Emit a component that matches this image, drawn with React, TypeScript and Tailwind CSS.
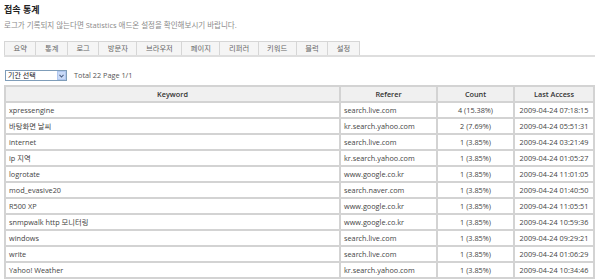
import React from "react";

const tabs = ["요약", "통계", "로그", "방문자", "브라우저", "페이지", "리퍼러", "키워드", "블럭", "설정"];

const rows = [
    ["xpressengine", "search.live.com", "4 (15.38%)", "2009-04-24 07:18:15"],
    ["바탕화면 날씨", "kr.search.yahoo.com", "2 (7.69%)", "2009-04-24 05:51:31"],
    ["internet", "search.live.com", "1 (3.85%)", "2009-04-24 03:21:49"],
    ["ip 지역", "kr.search.yahoo.com", "1 (3.85%)", "2009-04-24 01:05:27"],
    ["logrotate", "www.google.co.kr", "1 (3.85%)", "2009-04-24 11:01:05"],
    ["mod_evasive20", "search.naver.com", "1 (3.85%)", "2009-04-24 01:40:50"],
    ["R500 XP", "www.google.co.kr", "1 (3.85%)", "2009-04-24 11:05:51"],
    ["snmpwalk http 모니터링", "www.google.co.kr", "1 (3.85%)", "2009-04-24 10:59:36"],
    ["windows", "search.live.com", "1 (3.85%)", "2009-04-24 09:29:21"],
    ["write", "search.live.com", "1 (3.85%)", "2009-04-24 01:06:29"],
    ["Yahoo! Weather", "kr.search.yahoo.com", "1 (3.85%)", "2009-04-24 10:34:46"],
];

const App: React.FC = () => {
    return (
        <div className="w-[600px] h-[279px] overflow-hidden bg-white text-[#444] font-['Open_Sans','Noto_Sans_CJK_KR',sans-serif]">
            <div className="pl-[4px] pr-[5px] pt-[4px]">
                {/* title */}
                <h1 className="text-[9px] font-bold leading-[12px] text-[#222]">접속 통계</h1>
                <p className="mt-[4px] text-[7.5px] leading-[10px] text-[#8a8a8a]">
                    로그가 기록되지 않는다면 Statistics 애드온 설정을 확인해보시기 바랍니다.
                </p>

                {/* tabs */}
                <div className="mt-[11px] flex border-b-2 border-[#dedede]">
                    {tabs.map((t, i) => (
                        <div
                            key={t}
                            className={`h-[14px] px-[8.5px] flex items-center bg-[#f5f5f5] border-t border-r border-[#d6d6d6] text-[7.3px] text-[#666] ${i === 0 ? "border-l" : ""}`}
                        >
                            {t}
                        </div>
                    ))}
                </div>

                {/* period select + total */}
                <div className="mt-[13px] flex items-center">
                    <div className="ml-[1px] w-[62px] h-[11px] flex items-center border border-[#7f9db9] bg-white">
                        <span className="flex-1 pl-[2px] text-[7px] leading-[9px] text-[#111]">기간 선택</span>
                        <div className="w-[9px] h-[9px] flex items-center justify-center bg-[#c9daf8] border border-[#b1c7ef]">
                            <svg width="5" height="4" viewBox="0 0 5 4">
                                <path d="M0.5 0.8 L2.5 3 L4.5 0.8" fill="none" stroke="#4d6185" strokeWidth="1.1" />
                            </svg>
                        </div>
                    </div>
                    <span className="ml-[7px] text-[7.3px] text-[#555]">Total 22 Page 1/1</span>
                </div>

                {/* table */}
                <table className="mt-[4px] w-full table-fixed border-separate border-spacing-0 border border-[#d3d3d3] text-[7.3px]">
                    <colgroup>
                        <col className="w-[335px]" />
                        <col className="w-[97px]" />
                        <col className="w-[77px]" />
                        <col />
                    </colgroup>
                    <thead>
                        <tr>
                            {["Keyword", "Referer", "Count", "Last Access"].map((h) => (
                                <th key={h} className="h-[16px] p-0 border border-[#d3d3d3] bg-[#f0f0f0] font-semibold text-[#333] text-center">
                                    {h}
                                </th>
                            ))}
                        </tr>
                    </thead>
                    <tbody>
                        {rows.map((r) => (
                            <tr key={r[0]}>
                                <td className="h-[16px] px-[3px] py-0 border border-[#d3d3d3] text-[#444] whitespace-nowrap">{r[0]}</td>
                                <td className="h-[16px] px-[3px] py-0 border border-[#d3d3d3] text-[#444] whitespace-nowrap">{r[1]}</td>
                                <td className="h-[16px] p-0 border border-[#d3d3d3] text-[#444] text-center whitespace-nowrap">{r[2]}</td>
                                <td className="h-[16px] p-0 border border-[#d3d3d3] text-[#444] text-center whitespace-nowrap">{r[3]}</td>
                            </tr>
                        ))}
                    </tbody>
                </table>
            </div>
        </div>
    );
};

export default App;
